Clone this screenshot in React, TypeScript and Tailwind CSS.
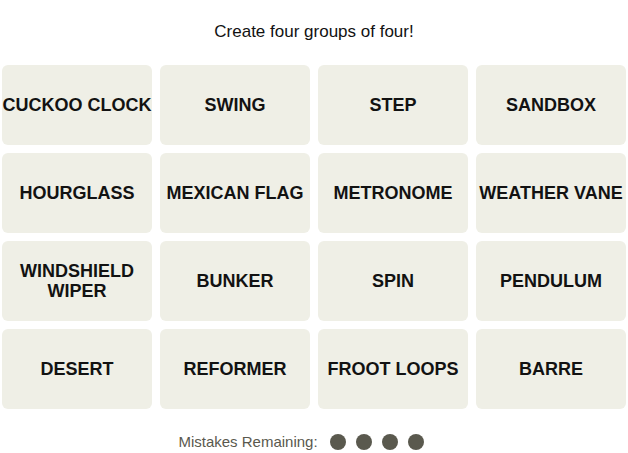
import React from 'react';

const words = [
  'CUCKOO CLOCK', 'SWING', 'STEP', 'SANDBOX',
  'HOURGLASS', 'MEXICAN FLAG', 'METRONOME', 'WEATHER VANE',
  'WINDSHIELD WIPER', 'BUNKER', 'SPIN', 'PENDULUM',
  'DESERT', 'REFORMER', 'FROOT LOOPS', 'BARRE',
];

const App = () => {
  return (
    <div className="w-[628px] h-[453px] bg-white font-['Liberation_Sans',Arial,sans-serif] text-[#121212]">
      <div className="pt-[22px] h-[65px] text-center text-[17px] leading-[20px]">
        Create four groups of four!
      </div>
      <div className="mx-[2px] grid grid-cols-4 gap-[8px]">
        {words.map((w) => (
          <div
            key={w}
            className="h-[80px] rounded-[6px] bg-[#efefe6] flex items-center justify-center text-center font-bold text-[18px] leading-[20px]"
          >
            {w}
          </div>
        ))}
      </div>
      <div className="mt-[22px] mr-[26px] flex items-center justify-center gap-[12px] text-[#5a594e]">
        <span className="text-[15px]">Mistakes Remaining:</span>
        <div className="flex gap-[10px]">
          {[0, 1, 2, 3].map((i) => (
            <span key={i} className="w-[16px] h-[16px] rounded-full bg-[#5a594e]" />
          ))}
        </div>
      </div>
    </div>
  );
};

export default App;
